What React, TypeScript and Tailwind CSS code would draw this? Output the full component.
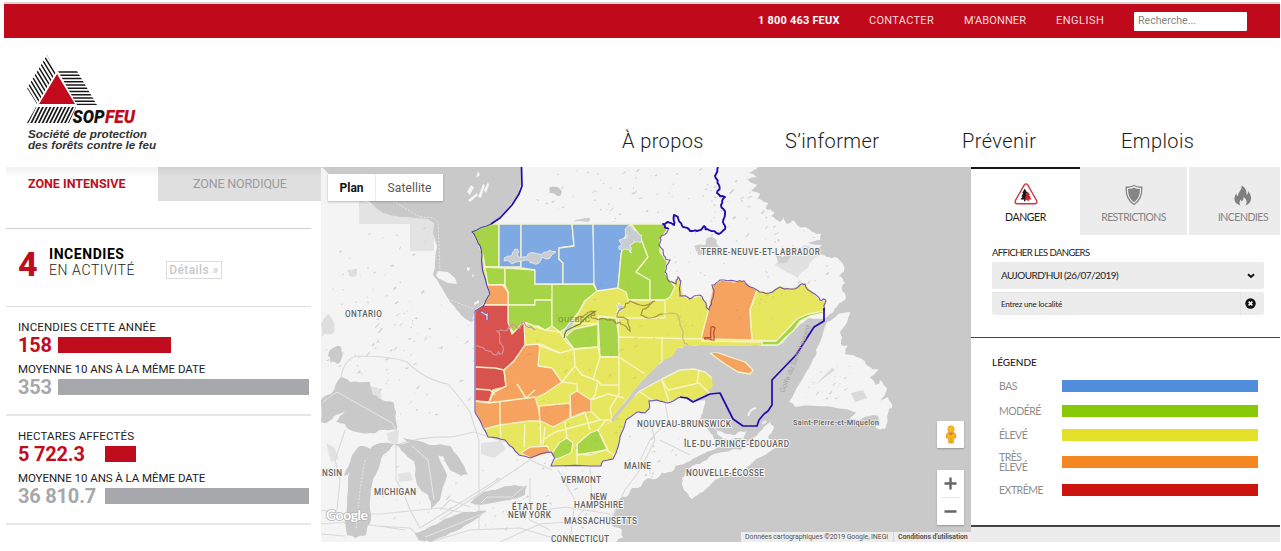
import React from "react";

type Pt = [number, number];

const parse = (s: string): Pt[] =>
  s.trim().split(/\s+/).map((p) => p.split(",").map(Number) as Pt);

function seeded(seed: number) {
  let s = seed * 7919 + 104729;
  const next = () => {
    s = (s * 16807) % 2147483647;
    return s / 2147483647;
  };
  next();
  next();
  return next;
}

/* Subdivides a line and displaces the midpoints, giving a coast-like edge. */
function rough(src: string, amp: number, closed = true, seed = 7): string {
  let pts = parse(src);
  const rnd = seeded(seed);
  if (closed) pts = [...pts, pts[0]];
  for (let k = 0; k < 2; k++) {
    const out: Pt[] = [];
    for (let i = 0; i < pts.length - 1; i++) {
      const [a, b] = [pts[i], pts[i + 1]];
      const len = Math.hypot(b[0] - a[0], b[1] - a[1]);
      out.push(a);
      if (len > 2.5 && len < 90) {
        const d = ((rnd() - 0.5) * 2 * amp) / (k + 1);
        out.push([
          (a[0] + b[0]) / 2 + (-(b[1] - a[1]) / len) * d,
          (a[1] + b[1]) / 2 + ((b[0] - a[0]) / len) * d,
        ]);
      }
    }
    out.push(pts[pts.length - 1]);
    pts = out;
  }
  return "M" + pts.map((p) => p[0].toFixed(1) + "," + p[1].toFixed(1)).join("L") + (closed ? "Z" : "");
}

const WATER = "#c9c9c9";
const LAND = "#f4f4f4";
const YELLOW = "#e7e65f";
const GREEN = "#a5d547";
const ORANGE = "#f5a35e";
const BLUE = "#7fa9e2";
const RED = "#d8534e";

const bay =
  "321,167 330,175 345,190 370,202 383,213 400,217 428,219 434,223 433,233 437,246 435,262 433,275 440,285 447,297 453,305 461,315 471,322 474,314 476,309 484,305 490,294 484,275 482,255 478,243 472,232 490,224 506,211 519,194 521,185 521,167";
const ocean =
  "758,167 754,170 748,173 757,177 748,180 757,185 751,190 760,194 757,198 768,203 766,209 774,212 771,216 780,222 783,217 787,224 793,220 800,227 806,227 812,232 821,234 820,240 808,243 822,245 817,253 827,257 835,257 843,264 844,272 839,276 845,283 842,290 846,298 838,305 834,311 826,318 810,318 800,324 790,334 779,345 755,345 740,347 700,345 677,348 662,362 640,383 612,420 649,402 680,398 692,401 705,400 703,412 700,419 710,432 714,439 722,446 703,454 690,461 675,466 671,472 662,473 656,479 645,480 640,487 632,488 626,497 618,500 615,512 612,526 622,530 623,538 615,542 971,542 971,167";
const lakes = [
  "321,422 321,400 332,393 341,377 350,382 370,382 373,395 378,398 393,402 396,412 397,430 380,430 371,433 350,430 345,424 336,422 345,412 336,415 328,422",
  "352,455 360,446 370,449 380,443 394,444 383,455 378,470 373,480 370,500 371,520 366,535 355,538 347,535 345,520 348,490 350,472 344,476",
  "395,444 410,442 403,438 430,445 450,446 457,455 465,468 468,475 460,475 450,470 443,456 438,455 447,475 440,500 431,509 428,495 417,485 415,465 412,460 403,452",
  "415,533 425,530 435,525 455,515 475,512 487,511 470,523 450,533 430,542 418,540",
  "470,503 482,493 495,490 515,485 527,485 525,495 510,500 480,505",
];
const islands = [
  "850,312 847,322 840,332 841,344 848,346 845,354 860,358 868,366 879,370 870,377 876,385 881,380 887,388 880,403 888,397 892,408 888,413 885,429 876,428 879,419 873,415 858,421 850,420 856,412 845,409 815,406 795,407 789,402 800,383 812,362 816,350 827,322 838,314",
  "684,490 682,478 688,470 700,464 712,455 725,452 740,450 750,440 762,430 770,422 774,428 768,438 780,445 765,455 750,465 735,472 715,480 703,492 692,499",
  "714,427 724,433 735,435 747,431 744,439 730,440 718,435",
];

const northMass =
  "499,224 662,224 668,228 660,240 660,252 667,262 665,273 672,283 680,278 683,297 690,299 700,296 706,303 709,310 713,285 722,280 735,282 741,280 757,290 769,293 780,286 790,289 800,285 805,284 813,293 820,300 826,301 824,313 810,316 800,321 794,330 785,338 778,345 755,345 740,347 700,345 677,348 673,356 662,361 650,373 640,383 626,400 612,420 590,438 560,450 551,453 531,458 519,455 512,447 505,440 488,437 482,425 475,412 475,311 483,305 490,294 484,275 482,255 478,243 472,232 490,224";
const southMass =
  "551,453 556,459 551,466 601,466 603,461 613,459 618,447 620,437 626,420 637,412 645,413 649,409 649,401 657,400 668,403 680,397 692,400 704,395 713,386 712,378 705,373 694,370 680,371 662,380 640,392 624,405 613,421 590,432";

const zones: { p: string; c: string }[] = [
  { p: "472,232 490,224 499,224 499,267 485,267 483,255 478,243", c: GREEN },
  { p: "485,267 505,268 505,285 488,285", c: GREEN },
  { p: "505,268 535,270 535,284 553,284 553,300 535,300 535,305 508,305 508,292 505,285", c: GREEN },
  { p: "508,305 535,305 535,300 552,300 552,326 545,330 538,326 530,328 524,322 515,334 508,326", c: GREEN },
  { p: "552,284 593,284 597,291 586,300 579,312 566,328 560,332 552,326", c: GREEN },
  { p: "499,224 521,224 521,267 499,267", c: BLUE },
  { p: "521,224 572,224 574,246 559,248 559,259 563,263 563,284 535,284 535,270 521,268", c: BLUE },
  { p: "572,224 593,224 595,284 563,284 563,263 559,259 559,248 574,246", c: BLUE },
  { p: "593,224 631,224 624,240 621,255 618,288 597,291 594,284", c: BLUE },
  { p: "631,224 640,236 648,257 636,272 650,280 650,300 628,300 626,292 618,288 621,255 624,240", c: GREEN },
  { p: "631,224 662,224 668,228 660,240 660,252 667,262 665,273 672,283 675,287 670,297 665,300 650,300 650,280 636,272 648,257 640,236", c: GREEN },
  { p: "487,285 503,285 508,292 508,305 483,305 490,294", c: ORANGE },
  { p: "475,311 483,305 508,305 508,322 512,334 524,322 525,345 514,361 504,370 506,387 493,390 489,402 475,401", c: RED },
  { p: "525,345 540,344 538,366 552,368 562,382 544,394 535,398 489,403 493,393 506,386 504,370 514,361", c: ORANGE },
  { p: "475,401 489,403 535,397 539,410 540,421 528,421 500,425 484,429 475,412", c: ORANGE },
  { p: "539,406 570,403 570,418 553,427 545,423 540,421", c: ORANGE },
  { p: "570,395 577,391 591,400 591,411 571,418", c: ORANGE },
  { p: "565,337 574,329 598,324 598,347 574,349", c: GREEN },
  { p: "598,317 618,318 619,357 600,357", c: GREEN },
  { p: "713,285 722,280 735,282 741,280 757,290 750,310 752,340 701,339 708,312", c: ORANGE },
  { p: "824,313 810,316 800,321 794,330 785,338 778,345 762,345 762,341 776,341 784,333 797,319 808,314 823,311", c: GREEN },
  { p: "577,444 590,433 598,430 607,449 590,455 577,454", c: GREEN },
  { p: "553,452 560,442 567,438 573,443 571,453 557,459 551,455", c: GREEN },
  { p: "521,453 530,447 547,446 551,453 531,458", c: ORANGE },
  { p: "710,353 716,352 730,357 745,362 753,370 750,374 738,372 725,364", c: ORANGE },
];

const divisions = [
  "585,300 579,312 566,328 575,323 598,324 598,316 618,318 665,318",
  "619,337 701,339", "619,303 616,318 619,337", "665,300 665,318", "662,337 662,360",
  "524,322 545,330 560,332 566,342 574,349 598,347",
  "538,345 560,353 574,349 575,366 562,382", "560,353 540,344", "575,366 582,375 598,381 601,385",
  "598,347 600,357 593,380", "600,357 619,357 619,394", "601,385 619,385", "619,357 645,374",
  "562,382 577,384 577,391", "598,381 595,395 591,400",
  "535,390 526,398", "517,384 526,398", "540,421 541,445", "500,402 500,425", "500,425 501,437",
  "525,424 524,447", "545,427 543,446", "565,422 567,438", "570,418 585,412 590,430",
  "591,411 600,420 612,420", "619,394 610,408 612,420", "591,400 608,394 624,398",
  "540,442 555,432 570,428 600,420", "577,444 577,466", "577,455 607,450 615,456",
  "606,420 598,430 608,450", "640,392 655,402", "662,380 669,402",
  "662,380 668,390 699,383 710,394", "699,370 697,384", "628,300 665,300",
  "475,367 495,368 504,370", "475,389 490,390 495,395", "757,290 750,310 752,340 776,341",
];

const labels: { t: string; x: number; y: number; w: number }[] = [
  { t: "ONTARIO", x: 345, y: 317, w: 37 },
  { t: "TERRE-NEUVE-ET-LABRADOR", x: 701, y: 255, w: 119 },
  { t: "NOUVEAU-BRUNSWICK", x: 637, y: 427, w: 94 },
  { t: "ÎLE-DU-PRINCE-ÉDOUARD", x: 684, y: 447, w: 105 },
  { t: "NOUVELLE-ÉCOSSE", x: 686, y: 476, w: 78 },
  { t: "MAINE", x: 624, y: 469, w: 27 },
  { t: "VERMONT", x: 561, y: 483, w: 40 },
  { t: "NEW", x: 590, y: 500, w: 17 },
  { t: "HAMPSHIRE", x: 574, y: 508, w: 49 },
  { t: "MASSACHUSETTS", x: 564, y: 524, w: 73 },
  { t: "CONNECTICUT", x: 551, y: 542, w: 58 },
  { t: "ÉTAT DE", x: 512, y: 510, w: 35 },
  { t: "NEW YORK", x: 508, y: 518, w: 43 },
  { t: "MICHIGAN", x: 374, y: 495, w: 42 },
  { t: "NSIN", x: 322, y: 476, w: 20 },
];

function specks(seed: number, n: number, x0: number, y0: number, w: number, h: number) {
  const r = seeded(seed);
  let d = "";
  for (let i = 0; i < n; i++) {
    const x = x0 + r() * w;
    const y = y0 + r() * h;
    const l = 0.5 + r() * r() * 5;
    const a = l * (0.2 + r() * 1.1);
    d += `M${x.toFixed(1)},${y.toFixed(1)}l${l.toFixed(1)},${(-a).toFixed(1)}l${(r() * 1.5).toFixed(1)},${(0.5 + r()).toFixed(1)}l${(-l * 0.8).toFixed(1)},${(a * 0.8).toFixed(1)}z`;
  }
  return d;
}

function FireMap() {
  return (
    <svg className="block h-[375px] w-[650px]" viewBox="321 167 650 375">
      <rect x="321" y="167" width="650" height="375" fill={LAND} />
      <path d="M359,200L420,218L434,220L434,251L410,251L410,224L359,224Z" fill="#e3e3e3" />
      <path d="M371,386l10,3v11l-10,-4zM387,433l12,-3l-2,17l-9,-7zM481,443l20,-2l5,8l-12,9l-13,-4zM398,474l12,-2l3,8l-14,2zM326,443l8,4l5,12l-8,3z" fill="#e2e2e2" />
      <path
        d={
          specks(11, 55, 328, 228, 100, 140) + specks(23, 70, 325, 300, 148, 125) +
          specks(37, 60, 525, 170, 225, 52) + specks(49, 45, 665, 180, 85, 105) +
          specks(57, 40, 750, 200, 80, 85) + specks(63, 35, 480, 460, 130, 70) +
          specks(71, 30, 610, 420, 70, 60) + specks(83, 20, 380, 450, 80, 70)
        }
        fill="#d2d2d2"
      />
      <path d={rough("330,350 340,346 342,352 338,364 330,363 328,356", 2)} fill="#cacaca" />
      <path d={rough("347,270 357,270 356,276 349,276", 1)} fill="#dedede" />
      <path d={rough("321,325 328,314 335,325 331,334 321,337", 2)} fill="#dedede" />
      <path d={rough("549,188 557,187 562,192 558,196 549,193", 1.5)} fill="#c6c6c6" />
      <path d={rough("572,222 580,219 590,218 588,222", 1)} fill="#cfcfcf" />
      <path d={rough("694,246 705,245 708,238 717,240 720,247 710,252 698,255", 2)} fill="#cdcdcd" />
      <path d={rough("775,265 790,252 805,245 820,254 808,268 798,278", 2)} fill="#e1e1e1" />
      <path d={rough("776,256 783,257 792,253 786,263 778,264", 1)} fill="#cfcfcf" />
      <g fill="none" stroke="#d9d9d9" strokeWidth="1.1">
        <path d="M341,377Q344,360 356,356Q390,356 407,362Q425,380 448,384Q462,400 470,412L479,440L479,530" />
        <path d="M397,445Q420,436 452,437L474,432L505,442M396,445L396,480Q405,495 410,510L420,528L500,478" />
        <path d="M321,510L345,514L380,514L440,508L470,514M321,524L350,522L405,530M321,534L345,536M378,526L410,528L425,542" />
        <path d="M430,542L470,530L520,528L560,540M440,520L470,500L530,460L552,470M530,478L530,520L550,530M345,430L335,460L340,480L337,510" />
        <path d="M558,470L575,500L570,542M590,468L592,500L575,520M610,520L625,490L640,470L655,440L650,420M665,402L668,420L650,440L640,460M690,455L660,440M500,542L540,524L600,520" />
        <path d="M530,512L565,507L610,514M470,507L450,500L440,510" />
      </g>

      <path d={rough(bay, 0.8)} fill={WATER} />
      <path d={rough(ocean, 1.3)} fill={WATER} />
      {lakes.map((l, i) => <path key={i} d={rough(l, 1.4, true, i + 3)} fill={WATER} />)}
      {islands.map((l, i) => <path key={i} d={rough(l, 1.8, true, i + 9)} fill={LAND} />)}
      <path d={specks(5, 26, 805, 365, 45, 36) + "M815,385L832,368L835,370ZM851,393l12,-3l4,8l-12,4z"} fill="#dadada" />
      <path d="M748,416q2,-7 8,-8M762,424l4,-3" stroke={LAND} strokeWidth="1.8" fill="none" />
      <g fill="none" stroke="#e8e8e8" strokeWidth="0.9">
        <path d="M323,402L337,392L392,423L397,432M412,446L428,460L434,500M481,503L487,497L512,497L525,486M425,537L458,524L486,512" />
        <path d="M393,201L420,217L434,218L438,222L440,270M445,298L474,309M365,460L360,490L356,530" strokeDasharray="2 1.5" />
      </g>
      <path d="M436,275L438,271L448,272L455,278L457,284L448,283L438,278ZM467,192l4,-7l3,2l-4,8zM478,197l5,-13l2,1l-4,13zM484,190l4,-8l1,3l-3,8zM476,178l2,-7l2,4zM474,303l5,-3v3l-5,2zM467,267l3,1l-1,3l-2,-1zM472,274l2,1l-1,3zM468,200l9,-7l1,2l-8,7z" fill={LAND} />

      <path d={rough(northMass, 0.3)} fill={YELLOW} />
      <path d={rough(southMass, 0.4)} fill={YELLOW} />
      {zones.map((z, i) => (
        <path key={i} d={"M" + z.p.split(" ").join("L") + "Z"} fill={z.c} stroke="#f4f3cf" strokeWidth="1.300" strokeLinejoin="round" />
      ))}
      <g fill="none" stroke="#f6f4c6" strokeWidth="1.400" strokeLinejoin="round">
        {divisions.map((d, i) => <path key={i} d={"M" + d.split(" ").join("L")} />)}
        <path d="M701,341L762,342M625,403L640,391L662,379L680,370L694,369L705,372L712,378" />
      </g>
      <path d={rough("684,346 700,346 755,347 776,347 755,355 720,352 677,355", 1)} fill={WATER} />
      <path d={specks(91, 45, 495, 275, 155, 130) + specks(97, 25, 510, 400, 110, 50) + specks(101, 16, 620, 290, 80, 50) + specks(103, 12, 715, 290, 90, 30)} fill="#7e7e50" opacity="0.17" />

      <g fill="#c9ccd0" stroke="#eceff2" strokeWidth="0.8">
        <path d={rough("504,258 511,256 515,249 519,252 518,256 526,257 530,253 543,254 548,251 556,252 550,258 542,257 537,264 530,263 526,260 512,264 504,261", 1.6)} />
        <path d={rough("619,240 627,238 625,229 632,226 637,231 642,235 640,243 634,241 630,246 632,253 626,249 619,249 622,245", 2)} />
        <path d={rough("563,334 567,326 575,319 571,328 564,337", 0.7)} />
        <path d={rough("616,306 622,305 624,308 619,312", 1)} />
      </g>
      <path d="M612,421L623,407L634,394L647,379L660,365" fill="none" stroke={WATER} strokeWidth="3" />
      <g fill="none" strokeWidth="1.2">
        <path d={rough("575,320 585,315 592,311 595,315 592,318 605,319 615,322 621,324 630,331 628,320 617,317 624,308 630,301 640,305 655,301 648,307 641,315 650,318 663,314", 2.6, false)} stroke="#8b722f" opacity="0.7" />
        <path d={rough("663,314 677,314 680,325 683,340 688,345", 2, false)} stroke="#c9bd77" />
        <path d={rough("704,338 711,338 711,327 715,328 714,340 704,339", 1, false)} stroke="#bb4b32" />
        <path d={rough("475,347 485,350 496,355 502,354 500,343 497,331 506,331 510,325 520,328 524,322 535,330", 3, false)} stroke="#d68f98" />
        <path d={rough("564,338 566,331 580,324 595,311", 1, false)} stroke="#66814b" />
      </g>

      <g fill="none" stroke="#7857a9" strokeWidth="1.1">
        <path d={rough("668,230 660,238 659,245 664,256 670,260 665,272 668,280 676,284 678,277 681,281 680,296 690,299 700,295 706,303 709,310 713,298 712,285 720,280 735,281 744,281 757,290 769,293 780,287 790,289 800,285 805,284 813,293 820,300 826,301 824,311", 2, false)} />
        <path d={rough("475,412 482,425 488,437 505,440 512,447 519,455 531,458 540,454 551,452 555,458 551,466 601,466 603,461 613,459 618,447 620,437 626,420 637,412 645,413 649,409 649,401 657,400 668,403 680,397", 0.7, false)} stroke="#7154bb" />
        <path d="M475,412V311L483,306" stroke="#6a55c5" />
        <path d={rough("483,307 490,294 484,275 482,255 478,243 472,232 491,224", 1.2, false)} stroke="#4b3da9" />
      </g>
      <g fill="none" stroke="#2609ae" strokeWidth="1.7" strokeLinejoin="round">
        <path d="M491,224L500,218L512,205L519,194L522,186L521.500,167" />
        <path strokeWidth="1.900" d={rough("718,167 715,176 719,185 717,193 725,197 721,205 725,214 723,222 725,229 719,234 709,230 704,226 697,231 690,231 683,227 679,221 674,215 674,225 668,222 663,224 669,229", 1.8, false)} />
        <path d="M680,397L687,398L693,402L710,394L720,393L733,419L743,426L757,426L759,420L764,414L768,411L772,405L772,380L796,355L814,327L824,321V308" />
      </g>
      <path d="M482,311l4,3l2,-2v8l-2,1v-5l-6,-4z" fill="#e8e3ec" stroke="#7457a6" strokeWidth="0.8" />

      <g fontFamily="Roboto, sans-serif" fontWeight="500" fontSize="8.200" fill="#626262" stroke="#f6f6f6" strokeWidth="2" paintOrder="stroke" strokeLinejoin="round">
        {labels.map((l) => (
          <text key={l.t} x={l.x} y={l.y} textLength={l.w}>{l.t}</text>
        ))}
        <text x="793" y="425" fontSize="7.500" textLength="86" stroke="#dedede">Saint-Pierre-et-Miquelon</text>
      </g>
      <g fontFamily="Roboto, sans-serif">
        <text x="558" y="322" fontSize="8" fontWeight="500" fill="#6f8b35" opacity="0.75" textLength="32">QUÉBEC</text>
        <text transform="translate(784,393) rotate(-68)" fontSize="7" fill="#a3a3a3" textLength="72">Golfe du Saint-Laurent</text>
      </g>
      <text x="326" y="519.500" fontFamily="Lato, sans-serif" fontSize="14" fontWeight="700" fill="#fff" stroke="#b4b4b4" strokeWidth="1.600" paintOrder="stroke" textLength="42">Google</text>
    </svg>
  );
}

function Logo() {
  const left = Array.from({ length: 11 }, (_, i) => i);
  return (
    <svg className="h-[100px] w-[134px]" viewBox="26 53 134 100">
      <defs>
        <clipPath id="wing"><path d="M47,55L56,72L37,104L27,88Z" /></clipPath>
        <clipPath id="slope"><path d="M58,71H77L97,105H77Z" /></clipPath>
        <clipPath id="base"><path d="M36,107H76L69,123H27Z" /></clipPath>
      </defs>
      <g clipPath="url(#wing)" stroke="#161616" strokeWidth="1.450">
        {left.map((i) => <path key={i} d={`M${47 - i * 2},${54 + i * 3.4}l14,23`} />)}
      </g>
      <g clipPath="url(#slope)" stroke="#161616" strokeWidth="1.700">
        {left.map((i) => <path key={i} d={`M55,${72 + i * 3.25}H100`} />)}
      </g>
      <g clipPath="url(#base)" stroke="#161616" strokeWidth="1.700">
        {Array.from({ length: 13 }, (_, i) => <path key={i} d={`M${27 + i * 3.75},124l9,-18`} />)}
      </g>
      <path d="M57,74L75,104H39Z" fill="#c20a1c" />
      <g fontFamily="Roboto, sans-serif" fontStyle="italic" fontWeight="900" fontSize="18.500">
        <text x="72.500" y="122.500" textLength="32" lengthAdjust="spacingAndGlyphs" fill="#111">SOP</text>
        <text x="105" y="122.500" textLength="30" lengthAdjust="spacingAndGlyphs" fill="#c20a1c">FEU</text>
      </g>
      <g fontFamily="Liberation Sans, sans-serif" fontStyle="italic" fontWeight="700" fontSize="11.500" fill="#333">
        <text x="28" y="137.500" textLength="119" lengthAdjust="spacingAndGlyphs">Société de protection</text>
        <text x="28" y="149" textLength="128" lengthAdjust="spacingAndGlyphs">des forêts contre le feu</text>
      </g>
    </svg>
  );
}

function Stat({ title, value, bar, barBox, red }: { title: string; value: string; bar: string; barBox: string; red?: boolean }) {
  return (
    <div className="h-[42px] pl-[12px]">
      <div className={`h-[16px] whitespace-nowrap text-[11.500px] leading-[16px] text-[#222] ${red ? "tracking-[0.15px]" : "tracking-[-0.05px]"}`}>{title}</div>
      <div className="flex h-[20px] items-center">
        <span className={`${barBox} shrink-0 whitespace-nowrap text-[20px] font-bold leading-[20px] tracking-[-0.2px] ${red ? "text-[#c00d1e]" : "text-[#a7a8ab]"}`}>{value}</span>
        <span className={`${bar} h-[16px] ${red ? "bg-[#c00d1e]" : "bg-[#a7a8ab]"}`} />
      </div>
    </div>
  );
}

function LeftPanel() {
  return (
    <aside className="flex w-[315px] shrink-0 flex-col bg-white">
      <div className="flex h-[34px] text-[12.500px]">
        <div className="flex w-[152px] items-center bg-gradient-to-b from-[#f1f1f1] to-white to-30% pl-[22px] font-bold text-[#c00d1e]">ZONE INTENSIVE</div>
        <div className="flex flex-1 items-center bg-gradient-to-b from-[#d2d2d2] to-[#dfdfdf] to-30% pl-[35px] tracking-[-0.15px] text-[#9b9b9b]">ZONE NORDIQUE</div>
      </div>
      <div className="h-[28px] w-[305px] border-b border-[#cfcfcf]" />
      <div className="flex h-[78px] w-[305px] border-b border-[#dcdcdc] pl-[12px]">
        <span className="w-[31px] pt-[17px] text-[34px] font-extrabold leading-[36px] text-[#c00d1e]">4</span>
        <div className="w-[117px] pt-[17px] leading-[16px]">
          <div className="text-[14px] font-bold tracking-[0.55px] text-black">INCENDIES</div>
          <div className="text-[14px] font-light tracking-[0.6px] text-[#222]">EN ACTIVITÉ</div>
        </div>
        <span className="mt-[32px] flex h-[18px] w-[56px] items-center justify-center whitespace-nowrap border border-[#dcdcdc] text-[12px] font-medium tracking-[0.4px] text-[#c9c9c9]">Détails »</span>
      </div>
      <div className="h-[109px] w-[305px] border-b-2 border-[#e6e6e6] pt-[12px]">
        <Stat title="INCENDIES CETTE ANNÉE" value="158" barBox="w-[40px]" bar="w-[113px]" red />
        <Stat title="MOYENNE 10 ANS À LA MÊME DATE" value="353" barBox="w-[40px]" bar="w-[251px]" />
      </div>
      <div className="h-[109px] w-[305px] border-b-2 border-[#e6e6e6] pt-[12px]">
        <Stat title="HECTARES AFFECTÉS" value="5 722.3" barBox="w-[87px]" bar="w-[31px]" red />
        <Stat title="MOYENNE 10 ANS À LA MÊME DATE" value="36 810.7" barBox="w-[87px]" bar="w-[204px]" />
      </div>
    </aside>
  );
}

function DangerIcon() {
  return (
    <svg className="h-[22px] w-[24px]" viewBox="0 0 24 22">
      <path d="M10.300,2Q12,-.3 13.700,2L22.600,17.500Q23.500,20.500 20.800,20.700H3.200Q.5,20.500 1.400,17.500Z" fill="#fff" stroke="#cf3540" strokeWidth="1.400" />
      <path d="M10.700,5.500L8.300,10H9.300L7.300,13.400H8.600L6.500,16.500H10V18.200H11.500V16.500H15L13,13.400H14.200L12.400,10H13.300Z" fill="#181818" />
      <path d="M13.800,8.500L11.400,12H12.500L10.500,14.500H12L10.200,16.600H13.500V18.200H14.700V16.600H17.500L16,14.500H17L15,12H16Z" fill="#cb2330" />
    </svg>
  );
}

function ShieldIcon() {
  return (
    <svg className="h-[22px] w-[20px]" viewBox="0 0 20 22">
      <path d="M10,1.500Q13.500,3.500 17.800,3.200Q18.500,15 10,20.500Q1.500,15 2.200,3.200Q6.500,3.500 10,1.500Z" fill="none" stroke="#858585" strokeWidth="1.300" />
      <path d="M10,3.700Q12.600,5 16,5Q16.200,14 10,18.200Q3.800,14 4,5Q7.400,5 10,3.700Z" fill="#858585" />
    </svg>
  );
}

function FlameIcon() {
  return (
    <svg className="h-[21px] w-[18px]" viewBox="0 0 18 21">
      <path d="M7.500,.2C11.800,3 13,6.200 12.400,10C13.700,9.200 14.200,7.700 14,6C18.500,11 18.500,17.500 11.500,20.500C13.500,17.500 13,14.500 9.500,12C9.800,14.500 8.500,15.200 7.800,16.700C7.300,15.800 7,15.200 6.900,14.500C5.200,16.500 5.200,18.500 6.500,20.500C-.5,18.500 -.8,13 2.300,8.500C2.600,10 3,10.700 3.900,11.200C3.900,7 8.500,5 7.500,.2Z" fill="#808080" />
    </svg>
  );
}

const legend = [
  { t: "BAS", c: "bg-[#508ddc]", row: "h-[24px]" },
  { t: "MODÉRÉ", c: "bg-[#86c909]", row: "h-[25px]" },
  { t: "ÉLEVÉ", c: "bg-[#e3e12b]", row: "h-[24px]" },
  { t: "TRÈS ÉLEVÉ", c: "bg-[#f48722]", row: "h-[30px]" },
  { t: "EXTRÊME", c: "bg-[#cb150e]", row: "h-[25px]" },
];

function RightPanel() {
  return (
    <aside className="flex w-[309px] shrink-0 flex-col bg-white font-['Lato',sans-serif]">
      <div className="flex h-[68px] text-[10.500px] leading-[14px] text-[#858585]">
        <div className="flex w-[109px] flex-col items-center border-t-2 border-[#171717] pt-[14px] text-[#222]">
          <DangerIcon />
          <span className="mt-[5px] tracking-[-0.4px]">DANGER</span>
        </div>
        <div className="mr-[2px] flex w-[107px] flex-col items-center bg-[#ececec] pt-[17px]">
          <ShieldIcon />
          <span className="mt-[4px] tracking-[-0.65px]">RESTRICTIONS</span>
        </div>
        <div className="flex w-[91px] flex-col items-center bg-[#ececec] pl-[17px] pt-[18px]">
          <FlameIcon />
          <span className="mt-[4px] tracking-[-0.5px]">INCENDIES</span>
        </div>
      </div>
      <div className="h-[103px] border-b border-[#444] px-[21px] pt-[11px]">
        <div className="h-[16px] text-[9.500px] leading-[14px] tracking-[-0.6px] text-[#222]">AFFICHER LES DANGERS</div>
        <div className="flex h-[27px] w-[272px] items-center justify-between rounded-[2px] bg-[#ececec] pl-[9px] pr-[9px] text-[10px] tracking-[-0.55px] text-[#222]">
          AUJOURD'HUI (26/07/2019)
          <svg className="h-[6px] w-[8px]" viewBox="0 0 8 6"><path d="M1,1.300L4,4L7,1.300" fill="none" stroke="#111" strokeWidth="2" /></svg>
        </div>
        <div className="mt-[3px] flex h-[23px] w-[272px] rounded-[2px] bg-[#ececec]">
          <div className="flex w-[249px] items-center border-r border-t border-[#e3e3e3] pl-[9px] text-[8px] tracking-[-0.2px] text-[#222]">Entrez une localité</div>
          <div className="flex flex-1 items-center pl-[4px]">
            <svg className="h-[11px] w-[11px]" viewBox="0 0 11 11"><circle cx="5.500" cy="5.500" r="5.200" fill="#111" /><path d="M3.600,3.600L7.400,7.400M7.400,3.600L3.600,7.400" stroke="#fff" strokeWidth="1.500" /></svg>
          </div>
        </div>
      </div>
      <div className="h-[187px] pl-[21px] pt-[17px]">
        <div className="h-[19px] text-[10px] font-medium leading-[14px] text-[#222]">LÉGENDE</div>
        {legend.map((l) => (
          <div key={l.t} className={`${l.row} flex items-center pl-[7px]`}>
            <div className="w-[63px] pr-[25px] text-[10.500px] leading-[10px] tracking-[-0.5px] text-[#8e8e8e]">{l.t}</div>
            <div className={`${l.c} h-[12px] w-[196px]`} />
          </div>
        ))}
      </div>
      <div className="h-[17px] border-t-2 border-[#444] bg-[#ececec]" />
    </aside>
  );
}

function MapControls() {
  return (
    <>
      <div className="absolute left-[7px] top-[7px] flex h-[27px] w-[115px] items-center bg-white text-[12px] shadow-[0_1px_2px_rgba(0,0,0,0.25)]">
        <span className="flex h-full w-[48px] items-center justify-center border-r border-[#ececec] font-bold text-[#111]">Plan</span>
        <span className="flex flex-1 items-center justify-center tracking-[0.1px] text-[#565656]">Satellite</span>
      </div>
      <div className="absolute left-[616px] top-[254px] flex h-[27px] w-[27px] items-center justify-center rounded-[1px] bg-white shadow-[0_1px_2px_rgba(0,0,0,0.25)]">
        <svg className="h-[21px] w-[12px]" viewBox="0 0 14 22">
          <path d="M3,9Q1,10 1.200,15L3.500,15L4.300,21H9.700L10.500,15L12.800,15Q13,10 11,9Z" fill="#f7b51d" stroke="#d28b12" strokeWidth=".6" />
          <circle cx="7" cy="4.700" r="3.800" fill="#f9bb20" stroke="#cf8c16" strokeWidth=".6" />
          <path d="M3.500,8.800H10.500L7,12.500Z" fill="#e8781a" />
          <path d="M7,15V21" stroke="#cc8718" strokeWidth=".7" />
        </svg>
      </div>
      <div className="absolute left-[616px] top-[303px] flex h-[55px] w-[27px] flex-col items-center rounded-[1px] bg-white shadow-[0_1px_2px_rgba(0,0,0,0.25)]">
        <svg className="h-[55px] w-[27px]" viewBox="0 0 27 55">
          <path d="M7.500,13.500H19.500M13.500,7.500V19.500M7.500,41.500H19.500" stroke="#666" strokeWidth="2.400" />
          <path d="M4,27.500H23" stroke="#e6e6e6" />
        </svg>
      </div>
      <div className="absolute bottom-0 right-0 flex h-[10px] w-[230px] items-center whitespace-nowrap bg-[#ededed] pl-[4px] text-[7px] leading-[10px] text-[#555]">
        <span className="w-[148px] tracking-[-0.1px]">Données cartographiques ©2019 Google, INEGI</span>
        <span className="border-l border-[#d0d5dc] pl-[4px] font-bold tracking-[-0.1px]">Conditions d'utilisation</span>
      </div>
    </>
  );
}

export default function App() {
  return (
    <div className="h-[551px] w-[1281px] overflow-hidden bg-white pt-[2px] font-['Roboto',sans-serif]">
      <div className="ml-[4px] h-[36px] w-[1276px] border-t-2 border-[#d9d5d6] bg-[#c00a1b]">
        <div className="flex h-[34px] items-center whitespace-nowrap pl-[754px] text-[11px] text-[#f8dcdf]">
          <span className="w-[111px] font-bold tracking-[0.2px] text-white">1 800 463 FEUX</span>
          <span className="w-[95px] tracking-[0.3px]">CONTACTER</span>
          <span className="w-[92px] tracking-[0.1px]">M'ABONNER</span>
          <span className="w-[78px] tracking-[0.5px]">ENGLISH</span>
          <span className="flex h-[19px] w-[113px] items-center rounded-[1px] bg-white pl-[4px] text-[10.500px] tracking-[0.05px] text-[#858585]">Recherche...</span>
        </div>
      </div>
      <header className="flex h-[129px] pl-[26px] pt-[15px]">
        <Logo />
        <nav className="flex whitespace-nowrap pl-[462px] pt-[76px] text-[20px] font-light leading-[24px] tracking-[0.4px] text-[#1c1c1c]">
          <span className="w-[163px]">À propos</span>
          <span className="w-[177px]">S’informer</span>
          <span className="w-[159px]">Prévenir</span>
          <span>Emplois</span>
        </nav>
      </header>
      <main className="flex h-[375px] pl-[6px]">
        <LeftPanel />
        <section className="relative h-[375px] w-[650px] shrink-0 overflow-hidden">
          <FireMap />
          <MapControls />
        </section>
        <RightPanel />
      </main>
    </div>
  );
}
